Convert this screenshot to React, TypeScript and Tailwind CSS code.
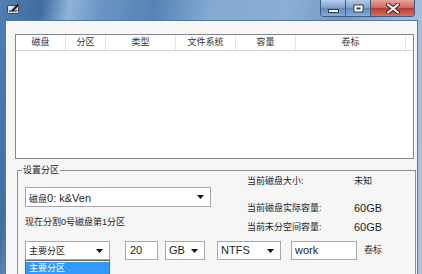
import type { ReactNode } from "react";

const AppIcon = () => (
  <svg width="13" height="12" viewBox="0 0 13 12">
    <rect x="0.5" y="3.5" width="11" height="8" rx="1" fill="#d9dee4" stroke="#3e4852" />
    <rect x="2" y="8" width="8" height="2" fill="#6b7784" />
    <path d="M4.5 8 L10.5 2 L12 3.5 L6 9.5 Z" fill="#1c1c1c" />
    <path d="M10.5 2 L11.5 1 L13 2.5 L12 3.5 Z" fill="#c0392b" />
    <circle cx="3" cy="5.5" r="1" fill="#ffffff" />
  </svg>
);

const Arrow = () => (
  <svg width="7" height="4" viewBox="0 0 7 4" className="shrink-0">
    <path d="M0 0h7L3.5 4z" fill="#111" />
  </svg>
);

const Combo = ({ className, children }: { className: string; children: ReactNode }) => (
  <div className={`relative flex items-center justify-between bg-white border border-[#a7a7a7] pl-[3px] pr-[6px] ${className}`}>
    <span className="whitespace-nowrap">{children}</span>
    <Arrow />
  </div>
);

const columns = [
  { label: "磁盘", w: "w-[50px]" },
  { label: "分区", w: "w-[40px]" },
  { label: "类型", w: "w-[70px]" },
  { label: "文件系统", w: "w-[60px]" },
  { label: "容量", w: "w-[60px]" },
  { label: "卷标", w: "w-[110px]" },
];

const info = [
  { label: "当前磁盘大小:", value: "未知", cjk: true, gap: "" },
  { label: "当前磁盘实际容量:", value: "60GB", cjk: false, gap: "mt-[13px]" },
  { label: "当前未分空间容量:", value: "60GB", cjk: false, gap: "mt-[5px]" },
];

export default function App() {
  return (
    <div className="w-[422px] h-[274px] overflow-hidden flex flex-col font-['Liberation_Sans','Noto_Sans_CJK_SC',sans-serif] text-[#1e1e1e] bg-[linear-gradient(100deg,#4f80b3_0%,#3f6e9f_9%,#8fb3d8_15%,#6a94c3_22%,#5683b5_33%,#84a9d2_45%,#8aaed5_62%,#6f98c6_74%,#9dbbdc_86%,#a9c3e0_100%)]">
      {/* title bar */}
      <div className="h-[20px] flex items-start shrink-0">
        <div className="ml-[7px] mt-[2px]">
          <AppIcon />
        </div>
        <div className="ml-auto mr-[7px] flex h-[17px] rounded-b-[4px] border border-t-0 border-[#3d5a80] overflow-hidden">
          <div className="w-[25px] flex items-end justify-center pb-[3px] bg-[linear-gradient(#b4cce8,#7b9fcb_50%,#6189ba_51%,#86aed9)] border-r border-[#3d5a80]">
            <svg width="11" height="4" viewBox="0 0 11 4">
              <rect x="0.5" y="0.5" width="10" height="3" fill="#fff" stroke="#2e3e52" />
            </svg>
          </div>
          <div className="w-[25px] flex items-center justify-center bg-[linear-gradient(#b4cce8,#7b9fcb_50%,#6189ba_51%,#86aed9)] border-r border-[#3d5a80]">
            <svg width="11" height="9" viewBox="0 0 11 9">
              <rect x="0.5" y="0.5" width="10" height="8" fill="#2e3e52" />
              <rect x="1.5" y="1.5" width="8" height="6" fill="#fff" />
              <rect x="3.5" y="3.5" width="4" height="2" fill="#2e3e52" />
            </svg>
          </div>
          <div className="w-[43px] flex items-center justify-center bg-[linear-gradient(#e6a59d,#d0655a_50%,#b83a2e_51%,#d7705f)]">
            <svg width="14" height="11" viewBox="0 0 14 11">
              <path d="M2 1.5 L12 9.5 M12 1.5 L2 9.5" stroke="#4a1712" strokeWidth="4" strokeLinecap="round" />
              <path d="M2 1.5 L12 9.5 M12 1.5 L2 9.5" stroke="#fff" strokeWidth="2.2" strokeLinecap="round" />
            </svg>
          </div>
        </div>
      </div>

      {/* client area */}
      <div className="flex-1 ml-[5px] mr-[4px] bg-[#f6f6f6] border-t border-x border-[#56789f] flex flex-col">
        {/* list view */}
        <div className="ml-[9px] mt-[13px] w-[399px] h-[125px] shrink-0 bg-white border border-[#828790]">
          <div className="flex h-[16px] border-b border-[#d5d5d5] text-[9px] leading-[15px] text-[#333]">
            {columns.map((c) => (
              <div key={c.label} className={`${c.w} text-center border-r border-[#e3e3e3]`}>
                {c.label}
              </div>
            ))}
            <div className="flex-1" />
          </div>
        </div>

        {/* group box */}
        <fieldset className="ml-[11px] mt-[7px] w-[399px] h-[120px] shrink-0 border border-[#8f8f8f] pl-[7px] m-0">
          <legend className="-ml-[3px] px-[1px] text-[9px] leading-[8px]">设置分区</legend>

          <div className="flex">
            <div className="w-[186px] flex flex-col">
              <Combo className="mt-[13px] w-[186px] h-[20px]">
                <span className="text-[9px]">磁盘</span>
                <span className="text-[11px]">0: k&amp;Ven</span>
              </Combo>
              <div className="mt-[8px] text-[9px] leading-[14px]">现在分割0号磁盘第1分区</div>
            </div>
            <div className="ml-[36px] flex flex-col">
              {info.map((r) => (
                <div key={r.label} className={`flex leading-[14px] ${r.gap}`}>
                  <span className="w-[107px] text-[9px]">{r.label}</span>
                  <span className={r.cjk ? "text-[9px]" : "text-[11px]"}>{r.value}</span>
                </div>
              ))}
            </div>
          </div>

          <div className="mt-[7px] flex items-center h-[19px] text-[11px]">
            <Combo className="w-[85px] h-[19px]">
              <span className="text-[9px]">主要分区</span>
              <div className="absolute left-[-1px] top-[18px] w-[85px] h-[14px] bg-white border-x border-t border-[#646464] pt-[1px]">
                <div className="h-[12px] bg-[#3399ff] text-white text-[9px] leading-[12px] pl-[3px]">主要分区</div>
              </div>
            </Combo>
            <div className="ml-[15px] w-[33px] h-[19px] bg-white border border-[#a7a7a7] pl-[4px] leading-[17px]">20</div>
            <Combo className="ml-[7px] w-[40px] h-[19px]">GB</Combo>
            <Combo className="ml-[12px] w-[64px] h-[19px]">NTFS</Combo>
            <div className="ml-[10px] w-[66px] h-[19px] bg-white border border-[#a7a7a7] pl-[3px] leading-[17px]">work</div>
            <span className="ml-[7px] text-[9px]">卷标</span>
          </div>
        </fieldset>
      </div>
    </div>
  );
}
